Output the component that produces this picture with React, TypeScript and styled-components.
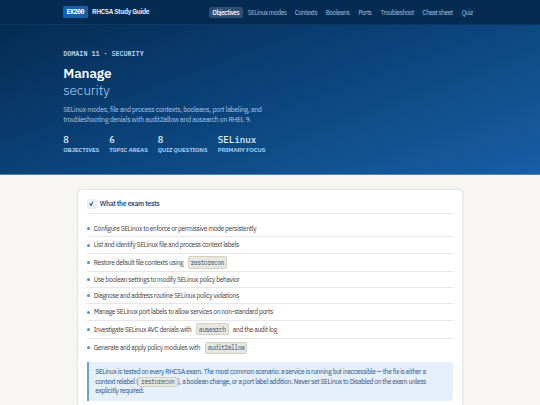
import React from 'react'
import styled, { createGlobalStyle } from 'styled-components'

const sans = "'IBM Plex Sans', Roboto, sans-serif";
const mono = "'IBM Plex Mono', 'DejaVu Sans Mono', monospace";

const GlobalStyle = createGlobalStyle`
  * {
    box-sizing: border-box;
  }
  body {
    margin: 0;
    background: #f7f6f2;
    font-family: ${sans};
    overflow: hidden;
  }
`;

const Page = styled.div`
  height: 405px;
  overflow: hidden;
`;

const NavBar = styled.nav`
  display: flex;
  align-items: center;
  justify-content: space-between;
  height: 24.5px;
  padding: 0 63px;
  background: #042c53;
  border-bottom: 0.5px solid #0c3864;
`;

const Brand = styled.div`
  display: flex;
  align-items: center;
  gap: 4.3px;
`;

const BrandTag = styled.span`
  display: flex;
  align-items: center;
  justify-content: center;
  width: 24.7px;
  height: 11.6px;
  border-radius: 1.5px;
  background: #185fa5;
  color: #fff;
  font: 700 6.4px ${mono};
  letter-spacing: -0.34px;
`;

const BrandName = styled.span`
  color: #e9f2fc;
  font-size: 6.8px;
  font-weight: 600;
  letter-spacing: -0.31px;
  white-space: nowrap;
`;

const NavLinks = styled.div`
  display: flex;
  gap: 1px;
`;

const NavLink = styled.a<{ $active?: boolean; $width: number }>`
  display: flex;
  align-items: center;
  justify-content: center;
  width: ${({ $width }) => $width}px;
  height: 11px;
  margin-top: 1px;
  border-radius: 2.5px;
  background: ${({ $active }) => ($active ? '#2d4e70' : 'transparent')};
  color: ${({ $active }) => ($active ? '#fff' : '#a6c3e2')};
  font-size: 6.4px;
  font-weight: ${({ $active }) => ($active ? 500 : 400)};
  letter-spacing: -0.38px;
  white-space: nowrap;
`;

const Hero = styled.header`
  height: 150.5px;
  padding: 25.5px 63.3px 0;
  background: linear-gradient(160deg, #042c53 0%, #0c447c 50%, #185fa5 100%);
  border-bottom: 1px solid #5481ae;
`;

const Eyebrow = styled.div`
  color: #b5d4f4;
  font: 600 6.8px/8px ${mono};
  letter-spacing: -0.06px;
`;

const Title = styled.h1`
  margin: 7px 0 0;
  color: #fff;
  font-size: 13.5px;
  font-weight: 600;
  letter-spacing: -0.13px;
  line-height: 16.8px;
`;

const TitleLight = styled.span`
  display: block;
  color: #b5d4f4;
  font-weight: 300;
`;

const Lead = styled.p`
  margin: 6.5px 0 0;
  color: #abcdf0;
  font-size: 6.8px;
  letter-spacing: -0.22px;
  line-height: 10.2px;
  white-space: nowrap;
`;

const Stats = styled.div`
  display: flex;
  gap: 10px;
  margin-top: 9px;
`;

const Stat = styled.div<{ $width: number }>`
  width: ${({ $width }) => $width}px;
  white-space: nowrap;
`;

const StatValue = styled.div`
  color: #e6f1fb;
  font: 500 9.2px/11px ${mono};
`;

const StatLabel = styled.div`
  color: #a3c6ea;
  font-size: 6.2px;
  font-weight: 700;
  line-height: 8px;
  letter-spacing: -0.16px;
  text-transform: uppercase;
`;

const Card = styled.main`
  width: 386px;
  height: 240px;
  margin: 13.5px auto 0;
  padding: 9.5px 9px 0;
  border: 0.5px solid #e9e8e4;
  border-radius: 5px;
  background: #fff;
  box-shadow: 0 0.5px 2px rgba(0, 0, 0, 0.1);
`;

const CardHeader = styled.div`
  display: flex;
  align-items: center;
  gap: 3.3px;
  height: 15px;
  padding-bottom: 4.5px;
  border-bottom: 1px solid #e8e7e5;
`;

const CheckBadge = styled.span`
  display: flex;
  align-items: center;
  justify-content: center;
  width: 9.5px;
  height: 9.5px;
  border-radius: 2px;
  background: #e6f1fb;
`;

const CardTitle = styled.h2`
  margin: 0;
  color: #234f80;
  font-size: 6.8px;
  font-weight: 600;
  letter-spacing: -0.27px;
`;

const List = styled.ul`
  margin: 6.5px 0 0;
  padding: 0;
  list-style: none;
`;

const Item = styled.li<{ $height: number }>`
  display: flex;
  align-items: center;
  height: ${({ $height }) => $height}px;
  border-bottom: 1px solid #e8e7e5;
  color: #3c3c3a;
  font-size: 6.6px;
  letter-spacing: -0.315px;
  white-space: pre;

  &::before {
    content: '';
    width: 3px;
    height: 3px;
    margin: 0.5px 3.8px 0 0;
    border-radius: 50%;
    background: #4a94d8;
  }

  &:last-child {
    border-bottom: 0;
  }
`;

const Code = styled.code<{ $width: number }>`
  display: flex;
  align-items: center;
  justify-content: center;
  width: ${({ $width }) => $width}px;
  height: 12.3px;
  margin: 0.5px 4.3px 0 4.4px;
  border: 0.5px solid #d3d1c7;
  border-radius: 1.5px;
  background: #e8e7dd;
  color: #2b557f;
  font: 400 6.4px ${mono};
  letter-spacing: -0.5px;
`;

const Callout = styled.div`
  height: 39px;
  margin-top: 5.5px;
  padding: 5.3px 6.2px;
  border-left: 2px solid #6aa3dc;
  border-radius: 0 4px 4px 0;
  background: #e6f0fb;
  color: #1d4e84;
  font-size: 6.6px;
  letter-spacing: -0.31px;
  line-height: 9.5px;
  white-space: nowrap;
`;

const CalloutLine = styled.div`
  display: flex;
  align-items: center;
  height: 9.5px;
  white-space: pre;
`;

const CalloutCode = styled(Code)`
  height: 9.5px;
  margin: 0.5px 0 0;
`;

const navItems = [
  { label: 'Objectives', width: 34.5 },
  { label: 'SELinux modes', width: 46 },
  { label: 'Contexts', width: 30 },
  { label: 'Booleans', width: 31.3 },
  { label: 'Ports', width: 21.4 },
  { label: 'Troubleshoot', width: 41 },
  { label: 'Cheat sheet', width: 37.8 },
  { label: 'Quiz', width: 19.5 },
];

const stats = [
  { value: '8', label: 'Objectives', width: 36 },
  { value: '6', label: 'Topic areas', width: 38.5 },
  { value: '8', label: 'Quiz questions', width: 50 },
  { value: 'SELinux', label: 'Primary focus', width: 50 },
];

interface Objective {
  text: string;
  height: number;
  code?: string;
  codeWidth?: number;
  after?: string;
}

const objectives: Objective[] = [
  { text: 'Configure SELinux to enforce or permissive mode persistently', height: 16.5 },
  { text: 'List and identify SELinux file and process context labels', height: 16.7 },
  { text: 'Restore default file contexts using', height: 18, code: 'restorecon', codeWidth: 39 },
  { text: 'Use boolean settings to modify SELinux policy behavior', height: 16.3 },
  { text: 'Diagnose and address routine SELinux policy violations', height: 16.3 },
  { text: 'Manage SELinux port labels to allow services on non-standard ports', height: 16.3 },
  { text: 'Investigate SELinux AVC denials with', height: 18, code: 'ausearch', codeWidth: 32.7, after: 'and the audit log' },
  { text: 'Generate and apply policy modules with', height: 18, code: 'audit2allow', codeWidth: 42.7 },
];

const App: React.FC = () => {
  return (
    <Page>
      <GlobalStyle />
      <NavBar>
        <Brand>
          <BrandTag>EX200</BrandTag>
          <BrandName>RHCSA Study Guide</BrandName>
        </Brand>
        <NavLinks>
          {navItems.map((item, index) => (
            <NavLink key={item.label} $active={index === 0} $width={item.width}>{item.label}</NavLink>
          ))}
        </NavLinks>
      </NavBar>
      <Hero>
        <Eyebrow>DOMAIN 11 · SECURITY</Eyebrow>
        <Title>
          Manage
          <TitleLight>security</TitleLight>
        </Title>
        <Lead>
          SELinux modes, file and process contexts, booleans, port labeling, and
          <br />
          troubleshooting denials with audit2allow and ausearch on RHEL 9.
        </Lead>
        <Stats>
          {stats.map((stat) => (
            <Stat key={stat.label} $width={stat.width}>
              <StatValue>{stat.value}</StatValue>
              <StatLabel>{stat.label}</StatLabel>
            </Stat>
          ))}
        </Stats>
      </Hero>
      <Card>
        <CardHeader>
          <CheckBadge>
            <svg width="5" height="6" viewBox="0 0 5 6" fill="none" stroke="#0c447c" strokeWidth="1">
              <path d="M0.8 2.4 L2 4.6 L3.8 0.8" />
            </svg>
          </CheckBadge>
          <CardTitle>What the exam tests</CardTitle>
        </CardHeader>
        <List>
          {objectives.map((item) => (
            <Item key={item.text} $height={item.height}>
              <span>{item.text}</span>
              {item.code && <Code $width={item.codeWidth || 0}>{item.code}</Code>}
              {item.after && <span>{item.after}</span>}
            </Item>
          ))}
        </List>
        <Callout>
          <CalloutLine>SELinux is tested on every RHCSA exam. The most common scenario: a service is running but inaccessible — the fix is either a</CalloutLine>
          <CalloutLine>
            context relabel (<CalloutCode $width={39.5}>restorecon</CalloutCode>), a boolean change, or a port label addition. Never set SELinux to Disabled on the exam unless
          </CalloutLine>
          <CalloutLine>explicitly required.</CalloutLine>
        </Callout>
      </Card>
    </Page>
  );
};

export default App;
